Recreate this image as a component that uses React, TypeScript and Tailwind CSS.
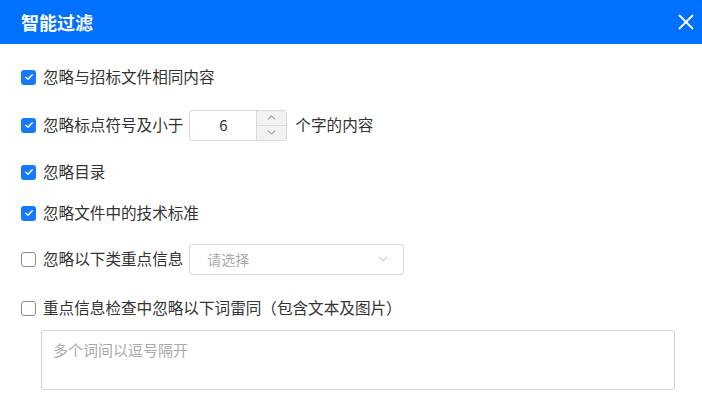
import { ChevronDown, ChevronUp, X } from "lucide-react";

type RowProps = {
  checked?: boolean;
  className?: string;
  children: React.ReactNode;
};

function Check({ checked }: { checked?: boolean }) {
  return checked ? (
    <span className="flex h-[15px] w-[15px] shrink-0 items-center justify-center rounded-[3px] bg-[#1677ff]">
      <svg width="10" height="10" viewBox="0 0 10 10" fill="none">
        <path d="M1.8 5.2 L4 7.3 L8.3 2.8" stroke="white" strokeWidth="1.4" strokeLinecap="round" strokeLinejoin="round" />
      </svg>
    </span>
  ) : (
    <span className="h-[15px] w-[15px] shrink-0 rounded-[3px] border border-[#8c8c8c] bg-white" />
  );
}

function Row({ checked, className, children }: RowProps) {
  return (
    <div className={"flex h-[32px] items-center " + (className ?? "")}>
      <Check checked={checked} />
      <div className="ml-[7px] flex items-center">{children}</div>
    </div>
  );
}

export default function App() {
  return (
    <div
      className="h-[398px] w-[702px] overflow-hidden bg-white text-[15.6px] text-[#333]"
      style={{ fontFamily: '"Microsoft YaHei", "Noto Sans CJK SC", "Liberation Sans", sans-serif' }}
    >
      {/* 헤더 */}
      <div className="flex h-[44px] items-center justify-between bg-[#0070ff] pl-[21px] pr-[3px]">
        <h1 className="text-[18px] font-bold leading-none text-white">智能过滤</h1>
        <X className="h-[26px] w-[26px] text-white" strokeWidth={1.7} />
      </div>

      <div className="flex flex-col pl-[21px] pr-[27px] pt-[17px]">
        <Row checked>忽略与招标文件相同内容</Row>

        <Row checked className="mt-[16px]">
          <span>忽略标点符号及小于</span>
          <div className="ml-[6px] flex h-[31px] w-[98px] overflow-hidden rounded-[3px] border border-[#d9d9d9]">
            <div className="flex flex-1 items-center justify-center text-[15px] text-[#333]">6</div>
            <div className="flex w-[30px] flex-col border-l border-[#d9d9d9] bg-[#f2f2f2]">
              <div className="flex flex-1 items-center justify-center border-b border-[#d9d9d9]">
                <ChevronUp className="h-[13px] w-[13px] text-[#555]" strokeWidth={1.5} />
              </div>
              <div className="flex flex-1 items-center justify-center">
                <ChevronDown className="h-[13px] w-[13px] text-[#555]" strokeWidth={1.5} />
              </div>
            </div>
          </div>
          <span className="ml-[8px]">个字的内容</span>
        </Row>

        <Row checked className="mt-[15px]">忽略目录</Row>

        <Row checked className="mt-[9px]">忽略文件中的技术标准</Row>

        <Row className="mt-[14px]">
          <span>忽略以下类重点信息</span>
          <div className="ml-[6px] flex h-[31px] w-[215px] items-center justify-between rounded-[3px] border border-[#d9d9d9] pl-[17px] pr-[13px]">
            <span className="text-[14px] text-[#aaa]">请选择</span>
            <ChevronDown className="h-[14px] w-[14px] text-[#aaa]" strokeWidth={1.5} />
          </div>
        </Row>

        <Row className="mt-[17px]">重点信息检查中忽略以下词雷同（包含文本及图片）</Row>

        <div className="ml-[20px] mt-[6px] h-[60px] w-[634px] rounded-[3px] border border-[#d4d4d4] px-[11px] pt-[8px] text-[15px] text-[#aaa]">
          多个词间以逗号隔开
        </div>
      </div>
    </div>
  );
}
